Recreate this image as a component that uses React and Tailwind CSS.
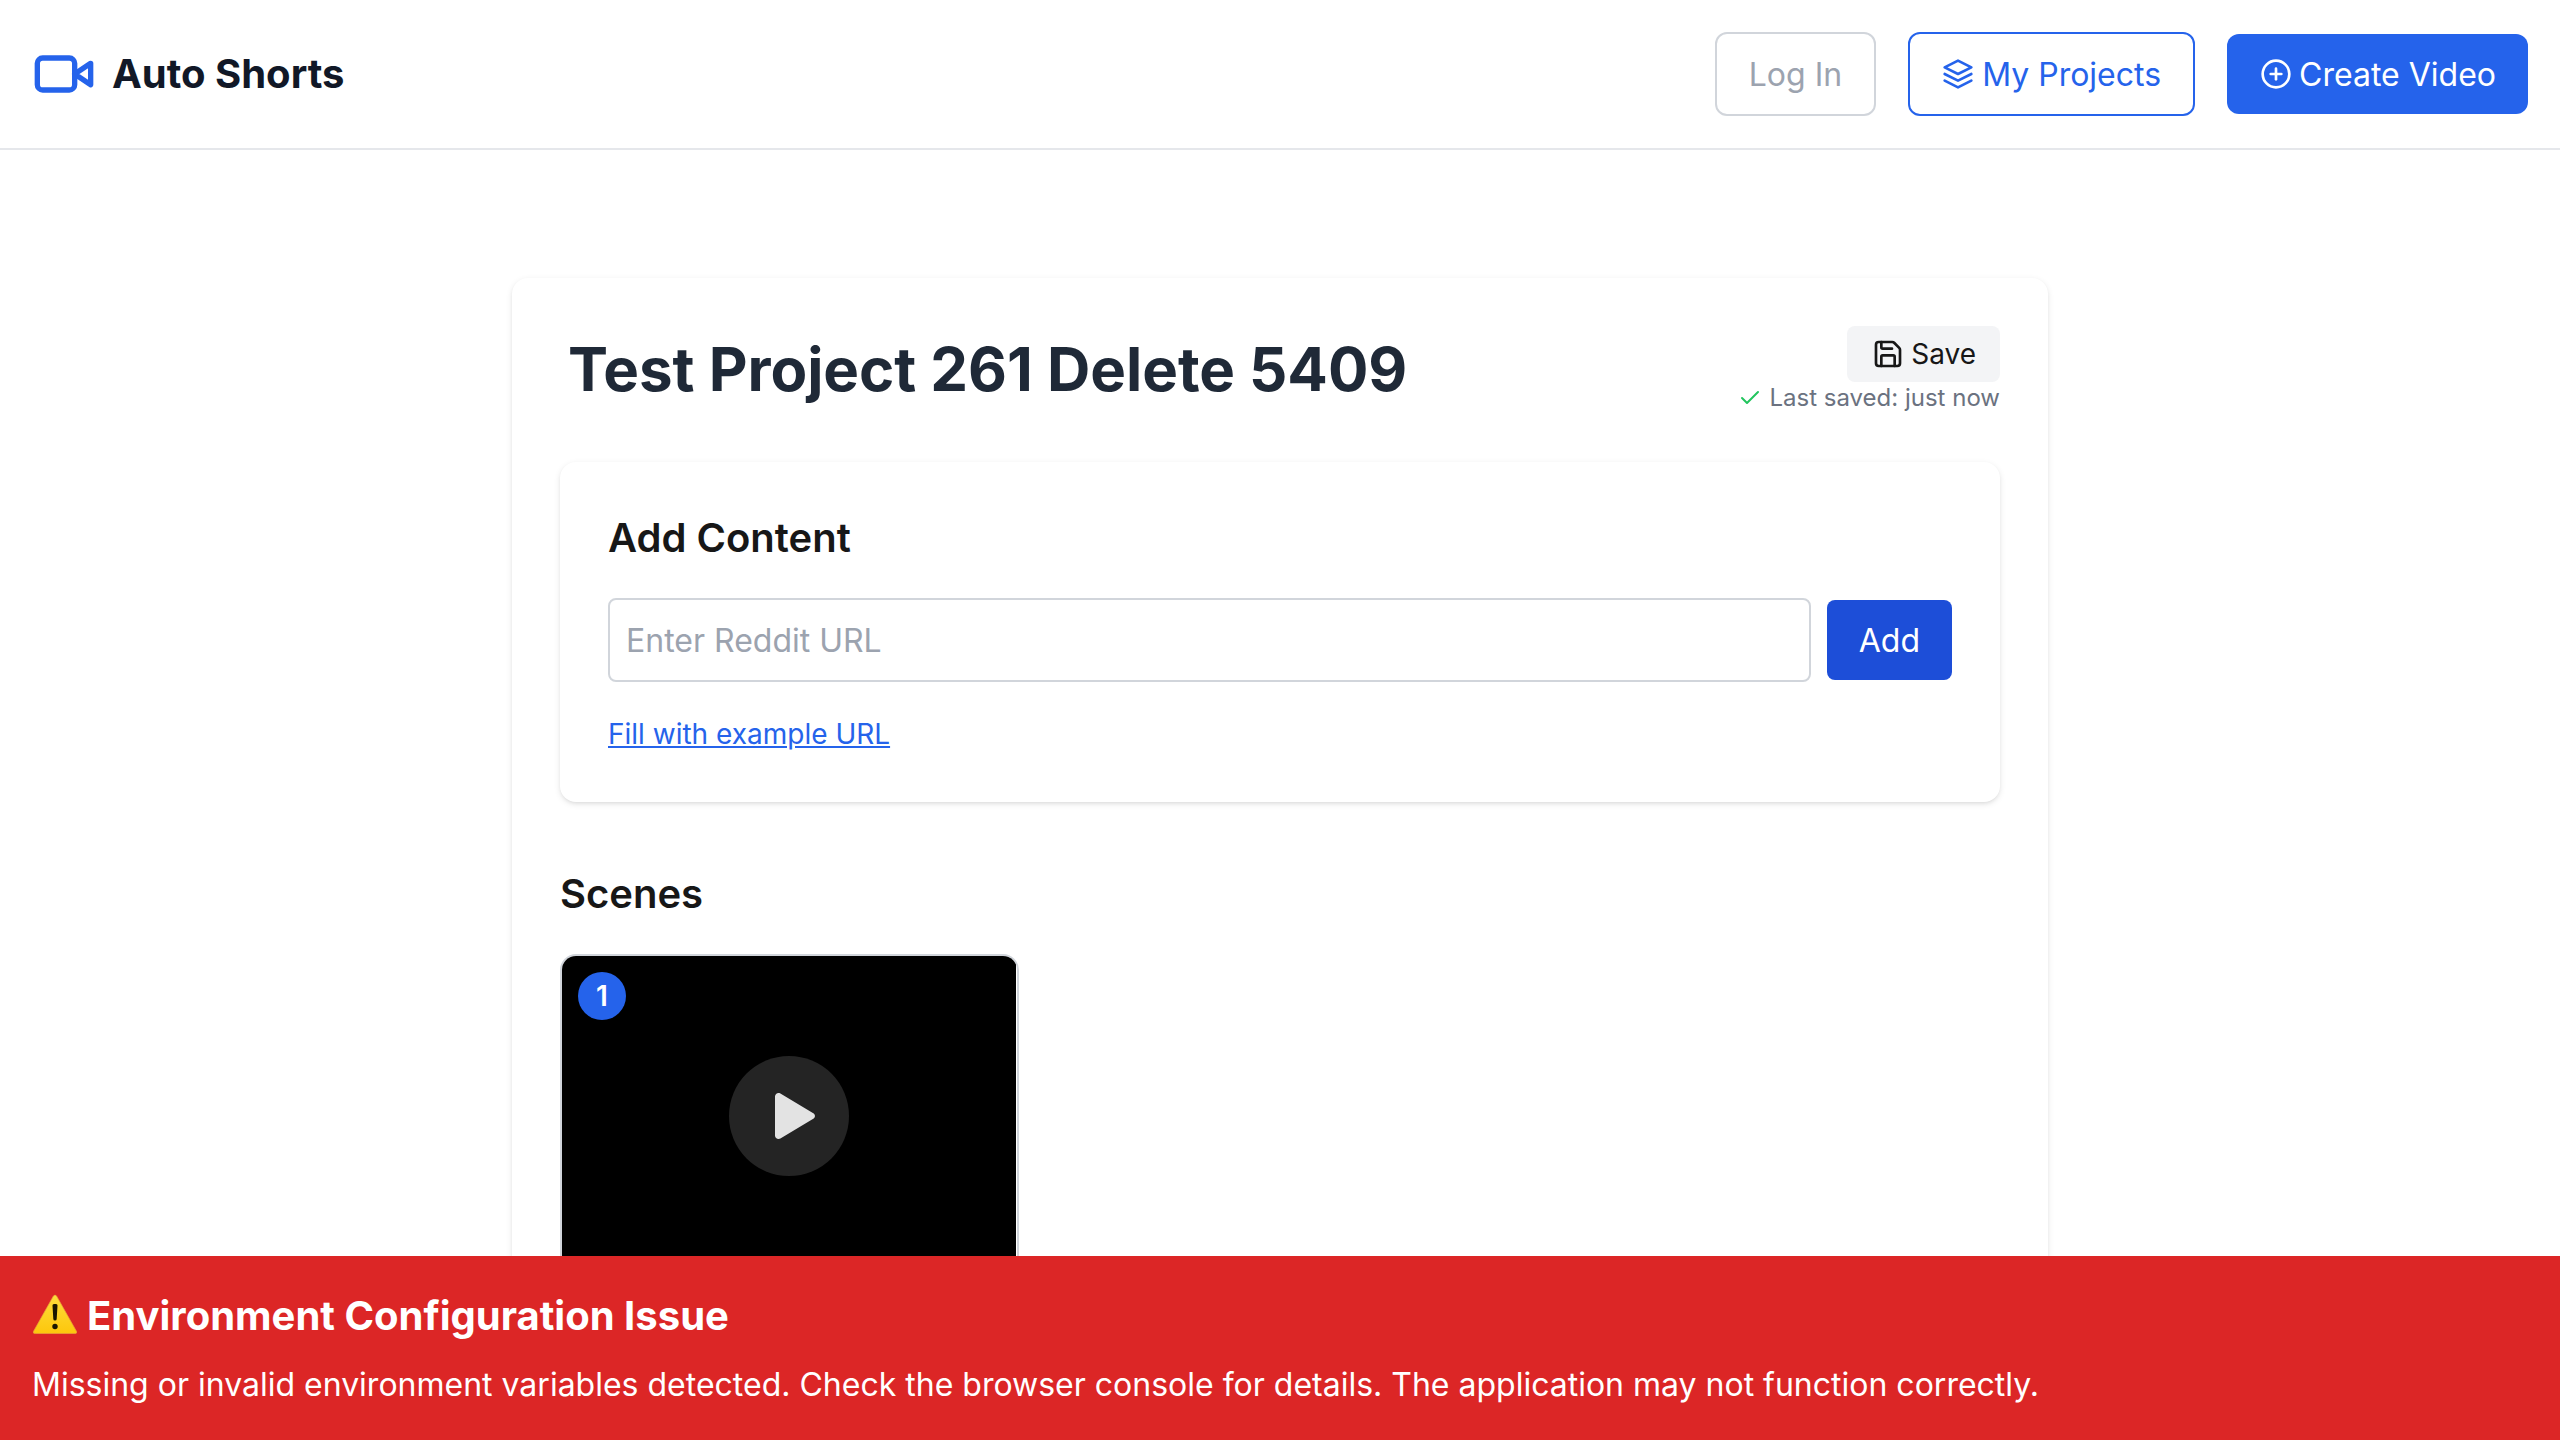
import { Check, Save } from "lucide-react";
import { FiLayers, FiPlusCircle } from "react-icons/fi";

function Header() {
  return (
    <header className="flex h-[150px] items-center justify-between border-b-2 border-[#e5e7eb] px-8">
      <div className="flex items-center gap-4">
        <svg
          className="size-16 text-[#2563eb]"
          viewBox="0 0 24 24"
          fill="none"
          stroke="currentColor"
          strokeWidth="2"
          strokeLinecap="round"
          strokeLinejoin="round"
        >
          <path d="m22 8-6 4 6 4V8Z" />
          <rect width="14" height="12" x="2" y="6" rx="2" ry="2" />
        </svg>
        <span className="text-[40px] leading-[56px] font-bold text-[#111827]">Auto Shorts</span>
      </div>
      <nav className="flex items-center gap-8 text-[32px] leading-[48px]">
        <button className="rounded-xl border-2 border-[#d1d5db] px-8 pt-[17px] pb-[15px] text-[#9ca3af]">Log In</button>
        <button className="flex items-center gap-2 rounded-xl border-2 border-[#2563eb] px-8 pt-[17px] pb-[15px] text-[#2563eb]">
          <FiLayers className="mb-0.5 size-8" />
          My Projects
        </button>
        <button className="flex items-center gap-[7px] rounded-xl bg-[#2563eb] pt-[17px] pr-8 pb-[15px] pl-[33px] text-white">
          <FiPlusCircle className="mb-0.5 size-8" />
          Create Video
        </button>
      </nav>
    </header>
  );
}

function ProjectHeading() {
  return (
    <div className="mb-12 flex items-center justify-between">
      <h1 className="mb-0.5 px-2 text-[60px] leading-[72px] font-bold tracking-[-0.05px] text-[#1f2937]">
        Test Project 261 Delete 5409
      </h1>
      <div className="flex flex-col items-end">
        <button className="flex items-center gap-[7px] rounded-lg bg-[#f3f4f6] py-2 pr-6 pl-[25px] text-[28px] leading-[40px] text-[#171717]">
          <Save className="size-8" />
          Save
        </button>
        <div className="flex items-center gap-[7px] text-[24px] leading-[32px] text-[#6b7280]">
          <Check className="size-6 text-[#22c55e]" />
          Last saved: just now
        </div>
      </div>
    </div>
  );
}

function AddContent() {
  return (
    <section className="rounded-2xl bg-white p-12 shadow-[0_2px_6px_rgba(0,0,0,0.1),0_2px_4px_-2px_rgba(0,0,0,0.1)]">
      <h2 className="mb-8 text-[40px] leading-[56px] font-semibold">Add Content</h2>
      <div className="flex items-center gap-4">
        <input
          className="h-[84px] min-w-0 flex-1 rounded-lg border-2 border-[#d1d5db] px-4 text-[32px] placeholder:text-[#9ca3af]"
          placeholder="Enter Reddit URL"
        />
        <button className="rounded-lg bg-[#1d4ed8] px-8 pt-[17px] pb-[15px] text-[32px] leading-[48px] text-white">
          Add
        </button>
      </div>
      <button className="mt-8 block text-[28px] leading-[40px] text-[#2563eb] underline">Fill with example URL</button>
    </section>
  );
}

function Scenes() {
  return (
    <section className="mt-16">
      <h2 className="mb-8 text-[40px] leading-[56px] font-semibold">Scenes</h2>
      <div className="grid grid-cols-3 gap-8">
        <div className="relative h-[480px] overflow-hidden rounded-2xl border-2 border-[#d1d5db]">
          <div className="flex h-[320px] w-[454px] items-center justify-center bg-black">
            <div className="flex size-[120px] items-center justify-center rounded-full bg-[#242424]">
              <svg className="ml-3 h-[46px] w-[40px]" viewBox="0 0 40 46" fill="#e3e3e3">
                <path d="M0 3.6C0 .8 3-.9 5.400.5L38.300 20.200C40.500 21.500 40.500 24.500 38.300 25.800L5.400 45.500C3 46.900 0 45.200 0 42.400Z" />
              </svg>
            </div>
          </div>
          <span className="absolute top-4 left-4 flex size-12 items-center justify-center rounded-full bg-[#2563eb] text-[28px] leading-[40px] font-semibold text-white">
            1
          </span>
        </div>
      </div>
    </section>
  );
}

function EnvironmentBanner() {
  return (
    <div className="fixed inset-x-0 bottom-0 bg-[#dc2626] p-8 text-white">
      <h3 className="flex items-center text-[40px] leading-[56px] font-bold">
        <svg className="mr-[9px] h-[56px] w-[46px]" viewBox="0 0 46 56">
          <defs>
            <linearGradient id="warning" x1="0" y1="0" x2="0" y2="1">
              <stop offset="0" stopColor="#fddc3c" />
              <stop offset="1" stopColor="#fdc70c" />
            </linearGradient>
          </defs>
          <path
            d="M21.300 8.200Q23 5.800 24.700 8.200L44.400 43.200Q45.500 45.500 42.800 45.500H3.200Q.5 45.500 1.600 43.200Z"
            fill="url(#warning)"
            stroke="#e8a33a"
            strokeWidth="0.7"
          />
          <path d="M20.500 17.500Q20.400 16 22 16H24Q25.600 16 25.500 17.500L24.700 31Q24.600 32.600 23 32.600T21.300 31Z" fill="#1a1600" />
          <circle cx="23" cy="38.500" r="2.700" fill="#1a1600" />
        </svg>
        Environment Configuration Issue
      </h3>
      <p className="mt-[17px] -mb-px text-[32px] leading-[48px]">
        Missing or invalid environment variables detected. Check the browser console for details. The application may
        not function correctly.
      </p>
    </div>
  );
}

export default function App() {
  return (
    <div className="h-screen overflow-hidden bg-white font-[Inter,sans-serif] text-[#171717]">
      <Header />
      <main className="mx-auto mt-32 w-[1536px] rounded-2xl bg-white p-12 shadow-[0_2px_6px_rgba(0,0,0,0.1),0_2px_4px_-2px_rgba(0,0,0,0.1)]">
        <ProjectHeading />
        <AddContent />
        <Scenes />
      </main>
      <EnvironmentBanner />
    </div>
  );
}
